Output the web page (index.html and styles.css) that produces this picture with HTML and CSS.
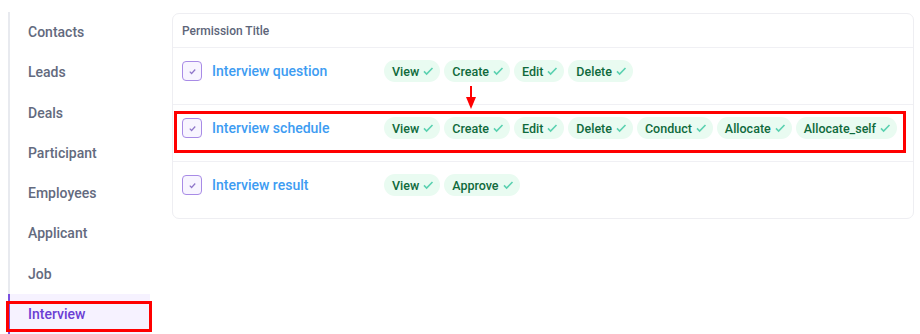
FILE: index.html
```html
<!DOCTYPE html>
<html lang="en">
<head>
    <meta charset="UTF-8">
    <title>Permissions</title>
    <link rel="stylesheet" href="styles.css">
</head>
<body>
    <div class="page">
        <ul class="sidebar">
            <li>Contacts</li>
            <li>Leads</li>
            <li>Deals</li>
            <li>Participant</li>
            <li>Employees</li>
            <li>Applicant</li>
            <li>Job</li>
            <li class="active">Interview<span class="mark-box"></span></li>
        </ul>

        <div class="card">
            <div class="card-head">Permission Title</div>

            <div class="perm-row">
                <div class="perm-title">
                    <span class="checkbox"><svg viewBox="0 0 12 12"><path d="M3 6.2l2 2 4-4.4"/></svg></span>
                    Interview question
                </div>
                <div class="chips">
                    <span class="chip">View<svg viewBox="0 0 12 12"><path d="M2 6.4l2.6 2.6L10.5 3"/></svg></span>
                    <span class="chip">Create<svg viewBox="0 0 12 12"><path d="M2 6.4l2.6 2.6L10.5 3"/></svg></span>
                    <span class="chip">Edit<svg viewBox="0 0 12 12"><path d="M2 6.4l2.6 2.6L10.5 3"/></svg></span>
                    <span class="chip">Delete<svg viewBox="0 0 12 12"><path d="M2 6.4l2.6 2.6L10.5 3"/></svg></span>
                </div>
            </div>

            <div class="perm-row">
                <span class="arrow"></span>
                <span class="mark-row"></span>
                <div class="perm-title">
                    <span class="checkbox"><svg viewBox="0 0 12 12"><path d="M3 6.2l2 2 4-4.4"/></svg></span>
                    Interview schedule
                </div>
                <div class="chips">
                    <span class="chip">View<svg viewBox="0 0 12 12"><path d="M2 6.4l2.6 2.6L10.5 3"/></svg></span>
                    <span class="chip">Create<svg viewBox="0 0 12 12"><path d="M2 6.4l2.6 2.6L10.5 3"/></svg></span>
                    <span class="chip">Edit<svg viewBox="0 0 12 12"><path d="M2 6.4l2.6 2.6L10.5 3"/></svg></span>
                    <span class="chip">Delete<svg viewBox="0 0 12 12"><path d="M2 6.4l2.6 2.6L10.5 3"/></svg></span>
                    <span class="chip">Conduct<svg viewBox="0 0 12 12"><path d="M2 6.4l2.6 2.6L10.5 3"/></svg></span>
                    <span class="chip">Allocate<svg viewBox="0 0 12 12"><path d="M2 6.4l2.6 2.6L10.5 3"/></svg></span>
                    <span class="chip">Allocate_self<svg viewBox="0 0 12 12"><path d="M2 6.4l2.6 2.6L10.5 3"/></svg></span>
                </div>
            </div>

            <div class="perm-row">
                <div class="perm-title">
                    <span class="checkbox"><svg viewBox="0 0 12 12"><path d="M3 6.2l2 2 4-4.4"/></svg></span>
                    Interview result
                </div>
                <div class="chips">
                    <span class="chip">View<svg viewBox="0 0 12 12"><path d="M2 6.4l2.6 2.6L10.5 3"/></svg></span>
                    <span class="chip">Approve<svg viewBox="0 0 12 12"><path d="M2 6.4l2.6 2.6L10.5 3"/></svg></span>
                </div>
            </div>
        </div>
    </div>
</body>
</html>
```

FILE: styles.css
```css
body {
    margin: 0;
    font-family: Roboto, "Liberation Sans", sans-serif;
    background-color: #fff;
    overflow: hidden;
}
.page {
    display: flex;
    align-items: flex-start;
    padding: 12px 6px 0 8px;
    gap: 22px;
}
.sidebar {
    list-style: none;
    margin: 0;
    padding: 0;
    width: 140px;
    flex-shrink: 0;
    border-left: 2px solid #e8eaef;
}
.sidebar li {
    position: relative;
    height: 40.3px;
    line-height: 41px;
    padding-left: 18px;
    font-size: 14px;
    font-weight: 500;
    color: #636a7e;
}
.sidebar li.active {
    margin-left: -2px;
    border-left: 2px solid #7a4fe0;
    background-color: #f6f2ff;
    color: #6b3fd4;
}
.mark-box {
    position: absolute;
    left: -4px;
    top: 7px;
    width: 140px;
    height: 25px;
    border: 3px solid #f00;
}
.card {
    flex: 1;
    min-width: 0;
    margin-top: 1px;
    border: 1px solid #eeeef2;
    border-radius: 7px;
}
.card-head {
    height: 33px;
    line-height: 34px;
    padding: 0 9px;
    font-size: 12px;
    font-weight: 500;
    color: #5d6579;
    border-bottom: 1px solid #f0f0f4;
}
.perm-row {
    position: relative;
    display: flex;
    align-items: center;
    padding: 12px 9px 22px;
    border-bottom: 1px solid #f0f0f4;
}
.perm-row:last-child {
    border-bottom: none;
}
.perm-title {
    width: 202px;
    flex-shrink: 0;
    display: flex;
    align-items: center;
    gap: 10px;
    font-size: 14px;
    font-weight: 500;
    color: #3d9cf2;
}
.checkbox {
    width: 18px;
    height: 18px;
    border: 1px solid #a88be6;
    border-radius: 4px;
    background-color: #f8f5ff;
    display: flex;
    align-items: center;
    justify-content: center;
}
.checkbox svg {
    width: 11px;
    height: 11px;
    fill: none;
    stroke: #8f76c9;
    stroke-width: 1.3;
}
.chips {
    display: flex;
    gap: 4px;
}
.chip {
    display: flex;
    align-items: center;
    gap: 3px;
    height: 22px;
    padding: 0 6px 0 8px;
    border-radius: 11px;
    background-color: #e9fbf1;
    color: #0f6a3c;
    font-size: 12.5px;
    font-weight: 500;
}
.chip svg {
    width: 12px;
    height: 12px;
    fill: none;
    stroke: #5ad1b0;
    stroke-width: 1.6;
}
.mark-row {
    position: absolute;
    left: 1px;
    top: 6px;
    width: 726px;
    height: 36px;
    border: 3px solid #f00;
}
.arrow {
    position: absolute;
    left: 297px;
    top: -19px;
    width: 2px;
    height: 12px;
    background-color: #f00;
}
.arrow::after {
    content: "";
    position: absolute;
    left: -4px;
    top: 11px;
    border-left: 5px solid transparent;
    border-right: 5px solid transparent;
    border-top: 12px solid #f00;
}
```
